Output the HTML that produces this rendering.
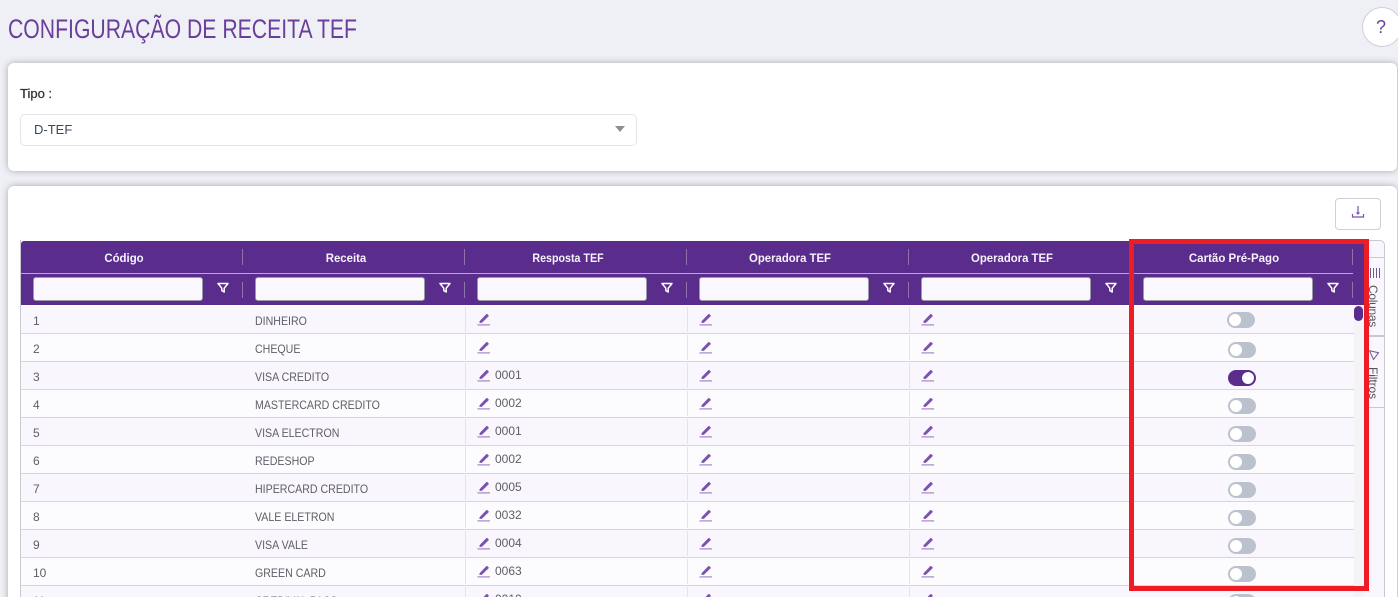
<!DOCTYPE html>
<html lang="pt">
<head>
<meta charset="utf-8">
<title>Configuração de Receita TEF</title>
<style>
*{box-sizing:border-box}
html,body{margin:0;padding:0;width:1398px;height:597px;overflow:hidden}
#wrap{position:relative;width:1398px;height:597px;overflow:hidden;background:#eff0f5;font-family:"Liberation Sans",sans-serif;color:#55565c}
.abs{position:absolute}
.card{position:absolute;left:8px;width:1389px;background:#fff;border-radius:6px;box-shadow:0 0 7px rgba(70,70,80,.42)}
.head{position:absolute;left:21px;top:241px;width:1343px;height:64px;background:#5a2d8c;border-radius:3px 0 0 0}
.hline{position:absolute;left:21px;top:273px;width:1332px;height:1px;background:#b9a8d0}
.ht{position:absolute;top:250px;width:222px;text-align:center;color:#f6f2fb;font-weight:bold;font-size:12px;line-height:15px}
.sep{position:absolute;width:1px;height:16px;background:#8f73b0}
.fi{position:absolute;top:277px;width:170px;height:24px;background:#faf8fe;border:1px solid #9a9aa5;border-radius:3px}
.fic{position:absolute;top:282px}
.row{position:absolute;left:21px;width:1333px;height:28px;border-bottom:1px solid #d6d6e0}
.odd{background:#f9f6fe}.even{background:#fcfcff}
.c1,.c2,.c3{position:absolute;font-size:12px;line-height:14px;color:#5d5e66;white-space:nowrap}
.c1{left:12px;top:8px}.c2{left:234px;top:8px;transform:scaleX(.885);transform-origin:0 0}.c3{left:474px;top:6px}
.d{position:absolute;top:1px;width:1px;height:25px;background:#e3e3e8}
.pen{position:absolute;top:6px}
.tg{position:absolute;left:1207px;top:8px;width:28px;height:16px;border-radius:8px;background:#bcc2cd}
.tg i{position:absolute;left:2px;top:2px;width:12px;height:12px;border-radius:50%;background:#fff}
.tg.on{background:#5a2d8c}.tg.on i{left:14px}
</style>
</head>
<body>
<div id="wrap">
<svg class="abs" style="left:0;top:9px" width="400" height="42"><text x="8" y="29" font-family="Liberation Sans" font-size="27" fill="#6a3f9b" textLength="349" lengthAdjust="spacingAndGlyphs">CONFIGURAÇÃO DE RECEITA TEF</text></svg>
<div class="abs" style="left:1362px;top:7px;width:40px;height:40px;border-radius:50%;background:#fff;border:1px solid #cfcfd6;color:#6a3fa5;font-size:18px;line-height:38px;padding-left:13px">?</div>

<div class="card" style="top:63px;height:108px"></div>
<div class="abs" style="left:20px;top:86px;font-size:13px;line-height:16px;color:#2f3036;-webkit-text-stroke:.25px #2f3036">Tipo :</div>
<div class="abs" style="left:20px;top:114px;width:617px;height:32px;background:#fff;border:1px solid #e4e4ea;border-radius:5px"></div>
<div class="abs" style="left:34px;top:122px;font-size:13px;line-height:16px;color:#3c4a5c">D-TEF</div>
<div class="abs" style="left:615px;top:126px;width:0;height:0;border-left:5px solid transparent;border-right:5px solid transparent;border-top:6px solid #8f8f8f"></div>

<div class="card" style="top:186px;height:430px"></div>
<div class="abs" style="left:1335px;top:198px;width:46px;height:32px;background:#fff;border:1px solid #cfcfd6;border-radius:4px"></div>
<svg class="abs" style="left:1351px;top:205px" width="14" height="14" viewBox="0 0 14 14" fill="none" stroke="#7b4fb0" stroke-width="1.2"><path d="M7 1v7.5M5.500 7.500 7 9l1.500-1.500M1.500 9v3h11V9"/></svg>

<div class="abs" style="left:20px;top:240px;width:1px;height:357px;background:#c8c8d0"></div>
<div class="head"></div>
<div class="hline"></div>

<div class="ht" style="left:13px;top:251px;transform:scaleX(.95)">Código</div>
<div class="ht" style="left:235px;top:251px;transform:scaleX(.95)">Receita</div>
<div class="ht" style="left:457px;top:251px;transform:scaleX(.89)">Resposta TEF</div>
<div class="ht" style="left:679px;top:251px;transform:scaleX(.945)">Operadora TEF</div>
<div class="ht" style="left:901px;top:251px;transform:scaleX(.945)">Operadora TEF</div>
<div class="ht" style="left:1123px;top:251px;transform:scaleX(.96)">Cartão Pré-Pago</div>

<div class="sep" style="left:242px;top:249px"></div><div class="sep" style="left:464px;top:249px"></div><div class="sep" style="left:686px;top:249px"></div><div class="sep" style="left:908px;top:249px"></div><div class="sep" style="left:1130px;top:249px"></div><div class="sep" style="left:1352px;top:249px"></div>
<div class="sep" style="left:242px;top:282px"></div><div class="sep" style="left:464px;top:282px"></div><div class="sep" style="left:686px;top:282px"></div><div class="sep" style="left:908px;top:282px"></div><div class="sep" style="left:1130px;top:282px"></div><div class="sep" style="left:1352px;top:282px"></div>

<div class="fi" style="left:33px"></div><div class="fi" style="left:255px"></div><div class="fi" style="left:477px"></div><div class="fi" style="left:699px"></div><div class="fi" style="left:921px"></div><div class="fi" style="left:1143px"></div>

<svg width="0" height="0" style="position:absolute"><defs>
<symbol id="f" viewBox="0 0 12 12"><path d="M1 1.500h10L7.200 6.200V10L4.800 8.600V6.200Z" fill="none" stroke="#fff" stroke-width="1.500" stroke-linejoin="round"/></symbol>
<symbol id="p" viewBox="0 0 14 14"><path d="M2.500 9.200 9.200 2.300a1 1 0 0 1 1.400 0l.8.800a1 1 0 0 1 0 1.400L4.800 10.900H2.500Z" fill="#7d52ad"/><path d="M.5 12.900H13" stroke="#9c7cc2" stroke-width="1.100"/></symbol>
</defs></svg>
<svg class="fic" style="left:217px" width="12" height="12"><use href="#f"/></svg>
<svg class="fic" style="left:439px" width="12" height="12"><use href="#f"/></svg>
<svg class="fic" style="left:661px" width="12" height="12"><use href="#f"/></svg>
<svg class="fic" style="left:883px" width="12" height="12"><use href="#f"/></svg>
<svg class="fic" style="left:1105px" width="12" height="12"><use href="#f"/></svg>
<svg class="fic" style="left:1327px" width="12" height="12"><use href="#f"/></svg>

<div class="row odd" style="top:306px"><span class="c1">1</span><span class="c2">DINHEIRO</span><b class="d" style="left:444px"></b><b class="d" style="left:666px"></b><b class="d" style="left:888px"></b><svg class="pen" style="left:456px" width="14" height="14"><use href="#p"/></svg><svg class="pen" style="left:678px" width="14" height="14"><use href="#p"/></svg><svg class="pen" style="left:900px" width="14" height="14"><use href="#p"/></svg><span class="tg" style="top:6px;left:1206px"><i></i></span></div>
<div class="row even" style="top:334px"><span class="c1">2</span><span class="c2">CHEQUE</span><b class="d" style="left:444px"></b><b class="d" style="left:666px"></b><b class="d" style="left:888px"></b><svg class="pen" style="left:456px" width="14" height="14"><use href="#p"/></svg><svg class="pen" style="left:678px" width="14" height="14"><use href="#p"/></svg><svg class="pen" style="left:900px" width="14" height="14"><use href="#p"/></svg><span class="tg"><i></i></span></div>
<div class="row odd" style="top:362px"><span class="c1">3</span><span class="c2">VISA CREDITO</span><b class="d" style="left:444px"></b><b class="d" style="left:666px"></b><b class="d" style="left:888px"></b><svg class="pen" style="left:456px" width="14" height="14"><use href="#p"/></svg><span class="c3">0001</span><svg class="pen" style="left:678px" width="14" height="14"><use href="#p"/></svg><svg class="pen" style="left:900px" width="14" height="14"><use href="#p"/></svg><span class="tg on"><i></i></span></div>
<div class="row even" style="top:390px"><span class="c1">4</span><span class="c2">MASTERCARD CREDITO</span><b class="d" style="left:444px"></b><b class="d" style="left:666px"></b><b class="d" style="left:888px"></b><svg class="pen" style="left:456px" width="14" height="14"><use href="#p"/></svg><span class="c3">0002</span><svg class="pen" style="left:678px" width="14" height="14"><use href="#p"/></svg><svg class="pen" style="left:900px" width="14" height="14"><use href="#p"/></svg><span class="tg"><i></i></span></div>
<div class="row odd" style="top:418px"><span class="c1">5</span><span class="c2">VISA ELECTRON</span><b class="d" style="left:444px"></b><b class="d" style="left:666px"></b><b class="d" style="left:888px"></b><svg class="pen" style="left:456px" width="14" height="14"><use href="#p"/></svg><span class="c3">0001</span><svg class="pen" style="left:678px" width="14" height="14"><use href="#p"/></svg><svg class="pen" style="left:900px" width="14" height="14"><use href="#p"/></svg><span class="tg"><i></i></span></div>
<div class="row even" style="top:446px"><span class="c1">6</span><span class="c2">REDESHOP</span><b class="d" style="left:444px"></b><b class="d" style="left:666px"></b><b class="d" style="left:888px"></b><svg class="pen" style="left:456px" width="14" height="14"><use href="#p"/></svg><span class="c3">0002</span><svg class="pen" style="left:678px" width="14" height="14"><use href="#p"/></svg><svg class="pen" style="left:900px" width="14" height="14"><use href="#p"/></svg><span class="tg"><i></i></span></div>
<div class="row odd" style="top:474px"><span class="c1">7</span><span class="c2">HIPERCARD CREDITO</span><b class="d" style="left:444px"></b><b class="d" style="left:666px"></b><b class="d" style="left:888px"></b><svg class="pen" style="left:456px" width="14" height="14"><use href="#p"/></svg><span class="c3">0005</span><svg class="pen" style="left:678px" width="14" height="14"><use href="#p"/></svg><svg class="pen" style="left:900px" width="14" height="14"><use href="#p"/></svg><span class="tg"><i></i></span></div>
<div class="row even" style="top:502px"><span class="c1">8</span><span class="c2">VALE ELETRON</span><b class="d" style="left:444px"></b><b class="d" style="left:666px"></b><b class="d" style="left:888px"></b><svg class="pen" style="left:456px" width="14" height="14"><use href="#p"/></svg><span class="c3">0032</span><svg class="pen" style="left:678px" width="14" height="14"><use href="#p"/></svg><svg class="pen" style="left:900px" width="14" height="14"><use href="#p"/></svg><span class="tg"><i></i></span></div>
<div class="row odd" style="top:530px"><span class="c1">9</span><span class="c2">VISA VALE</span><b class="d" style="left:444px"></b><b class="d" style="left:666px"></b><b class="d" style="left:888px"></b><svg class="pen" style="left:456px" width="14" height="14"><use href="#p"/></svg><span class="c3">0004</span><svg class="pen" style="left:678px" width="14" height="14"><use href="#p"/></svg><svg class="pen" style="left:900px" width="14" height="14"><use href="#p"/></svg><span class="tg"><i></i></span></div>
<div class="row even" style="top:558px"><span class="c1">10</span><span class="c2">GREEN CARD</span><b class="d" style="left:444px"></b><b class="d" style="left:666px"></b><b class="d" style="left:888px"></b><svg class="pen" style="left:456px" width="14" height="14"><use href="#p"/></svg><span class="c3">0063</span><svg class="pen" style="left:678px" width="14" height="14"><use href="#p"/></svg><svg class="pen" style="left:900px" width="14" height="14"><use href="#p"/></svg><span class="tg"><i></i></span></div>
<div class="row odd" style="top:586px"><span class="c1">11</span><span class="c2">CREDIVAL PASS</span><b class="d" style="left:444px"></b><b class="d" style="left:666px"></b><b class="d" style="left:888px"></b><svg class="pen" style="left:456px" width="14" height="14"><use href="#p"/></svg><span class="c3">0010</span><svg class="pen" style="left:678px" width="14" height="14"><use href="#p"/></svg><svg class="pen" style="left:900px" width="14" height="14"><use href="#p"/></svg><span class="tg"><i></i></span></div>

<div class="abs" style="left:1354px;top:305px;width:10px;height:292px;background:#f4f4f6"></div>
<div class="abs" style="left:1354px;top:306px;width:9px;height:15px;border-radius:5px;background:#5a2d8c"></div>

<div class="abs" style="left:1364px;top:240px;width:21px;height:380px;background:#f9f6fe;border:1px solid #c9c9d1;border-left:0;border-radius:0 5px 0 0"></div>
<div class="abs" style="left:1364px;top:257px;width:21px;height:1px;background:#c9c9d1"></div>
<div class="abs" style="left:1364px;top:335px;width:21px;height:2px;background:#c9c9d1"></div>
<div class="abs" style="left:1364px;top:407px;width:21px;height:1px;background:#c9c9d1"></div>
<svg class="abs" style="left:1369px;top:268px" width="11" height="10" stroke="#6f5a8f" stroke-width="1"><path d="M1.500 0v10M4.500 0v10M7.500 0v10M10.500 0v10"/></svg>
<div class="abs" style="left:1367px;top:285px;width:12px;height:42px"><span style="position:absolute;left:12px;top:0;transform-origin:0 0;transform:rotate(90deg);font-size:12px;line-height:12px;letter-spacing:-.3px;color:#55565c;white-space:nowrap">Colunas</span></div>
<svg class="abs" style="left:1369px;top:350px" width="11" height="11" viewBox="0 0 11 11" fill="none" stroke="#6f5a8f" stroke-width="1"><path d="M.5 .7 9.500 2.700 4.500 9.500Z"/></svg>
<div class="abs" style="left:1367px;top:367px;width:12px;height:36px"><span style="position:absolute;left:12px;top:0;transform-origin:0 0;transform:rotate(90deg);font-size:12px;line-height:12px;letter-spacing:-.1px;color:#55565c;white-space:nowrap">Filtros</span></div>

<div class="abs" style="left:1129px;top:239px;width:240px;height:352px;border:5px solid #ee1c25"></div>
</div>
</body>
</html>
